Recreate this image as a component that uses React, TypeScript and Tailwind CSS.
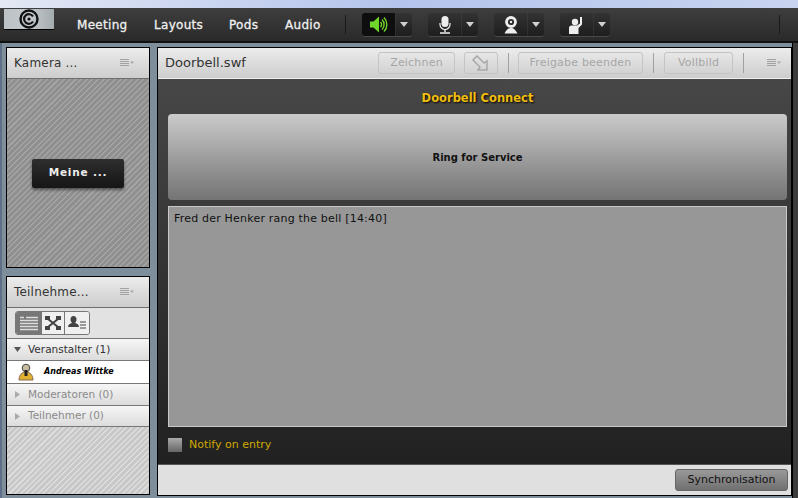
import type { ReactNode } from "react";

const MENU = [
  { label: "Meeting", width: "w-[77px]" },
  { label: "Layouts", width: "w-[75px]" },
  { label: "Pods", width: "w-[56px]" },
  { label: "Audio", width: "w-[48px]" },
];

const HATCH =
  "bg-[repeating-linear-gradient(135deg,#a3a3a3_0px,#a3a3a3_1.5px,#8f8f8f_1.5px,#8f8f8f_4px)]";
const HATCH_LIGHT =
  "bg-[repeating-linear-gradient(135deg,#dcdcdc_0px,#dcdcdc_1.5px,#c8c8c8_1.5px,#c8c8c8_4px)]";

function MenuIcon() {
  return (
    <svg width="14" height="8" viewBox="0 0 14 8" className="shrink-0">
      <path d="M0 .5h9M0 2.5h9M0 4.5h9M0 6.5h9" stroke="#a2a2a2" strokeWidth="1" />
      <path d="M10 2.5h4l-2 2.500z" fill="#a8a8a8" />
    </svg>
  );
}

function Caret() {
  return (
    <svg width="8" height="5" viewBox="0 0 8 5">
      <path d="M0 0h8L4 5z" fill="#d0d0d0" />
    </svg>
  );
}

function ToolGroup({ children, active }: { children: ReactNode; active?: boolean }) {
  return (
    <div className="flex h-[23px] rounded-[3px] shadow-[0_1px_0_#4a4a4a]">
      <div
        className={`flex w-[33px] items-center justify-center rounded-l-[3px] ${
          active ? "bg-[#0e0e0e]" : "bg-gradient-to-b from-[#333] to-[#1e1e1e]"
        }`}
      >
        {children}
      </div>
      <div className="ml-px flex w-[16px] items-center justify-center rounded-r-[3px] bg-gradient-to-b from-[#333] to-[#1e1e1e]">
        <Caret />
      </div>
    </div>
  );
}

function DisabledButton({ children, width }: { children: ReactNode; width: string }) {
  return (
    <div
      className={`flex h-[22px] items-center justify-center rounded-[3px] border border-[#c4c4c4] text-[11px] tracking-[0.2px] text-[#a6a6a6] ${width}`}
    >
      {children}
    </div>
  );
}

function Separator() {
  return <div className="h-[20px] w-px bg-[#a0a0a0]" />;
}

function PanelHeader({ title }: { title: string }) {
  return (
    <div className="flex h-[31px] shrink-0 items-center justify-between border-b border-[#6e6e6e] bg-gradient-to-b from-[#ececec] to-[#cdcdcd] pl-[7px] pr-[15px] text-[12px] tracking-[0.2px] text-[#333]">
      <span>{title}</span>
      <MenuIcon />
    </div>
  );
}

function TreeRow({ label, open, height }: { label: string; open?: boolean; height: string }) {
  return (
    <div
      className={`flex shrink-0 items-center border-b border-[#777] bg-gradient-to-b from-[#f6f6f6] to-[#dcdcdc] pl-[7px] text-[10.5px] ${height} ${
        open ? "text-[#333]" : "text-[#8a8a8a]"
      }`}
    >
      <svg width="7" height="7" viewBox="0 0 7 7" className="mr-[7px]">
        {open ? <path d="M0 1h7L3.500 6z" fill="#555" /> : <path d="M1 0l5 3.500L1 7z" fill="#aaa" />}
      </svg>
      {label}
    </div>
  );
}

export default function App() {
  return (
    <div className="flex h-[498px] w-[798px] flex-col overflow-hidden bg-[#7e8f9b] font-['DejaVu_Sans',sans-serif]">
      {/* window title strip */}
      <div className="h-[8px] shrink-0 bg-gradient-to-r from-[#e4e8f4] via-[#b4c4ec] to-[#c8d4f0]" />

      {/* menu bar */}
      <div className="flex h-[35px] shrink-0 items-center border-b-2 border-[#111] bg-gradient-to-b from-[#3e3e3e] to-[#2a2a2a] pl-[4px]">
        <div className="mb-[11px] flex h-[21px] w-[50px] items-center justify-center border-b border-black bg-gradient-to-r from-[#bcc2c6] via-[#c4c8cc] to-[#a4acb0]">
          <svg width="20" height="20" viewBox="0 0 20 20">
            <circle cx="10" cy="10" r="8.500" fill="none" stroke="#111" strokeWidth="2.400" />
            <path d="M14 7.500a4.800 4.800 0 1 0 0 5" fill="none" stroke="#111" strokeWidth="2.200" />
            <circle cx="10" cy="10" r="1.600" fill="#111" />
          </svg>
        </div>
        <div className="ml-[23px] flex text-[12px] tracking-[0.3px] text-[#f0f0f0] [-webkit-text-stroke:0.3px_#f0f0f0]">
          {MENU.map((item) => (
            <span key={item.label} className={item.width}>
              {item.label}
            </span>
          ))}
        </div>
        <div className="ml-[12px] h-[19px] w-px bg-[#1a1a1a]" />
        <div className="ml-[16px] flex gap-[16px]">
          <ToolGroup active>
            <svg width="18" height="17" viewBox="0 0 18 17">
              <path d="M0 5.500h3.500L9 .5v16l-5.500-5H0z" fill="#6fd62a" />
              <path d="M10.500 6a3.500 3.500 0 0 1 0 5M12 3.500a7 7 0 0 1 0 10M14 1.500a10 10 0 0 1 0 14" fill="none" stroke="#6fd62a" strokeWidth="1.400" />
            </svg>
          </ToolGroup>
          <ToolGroup>
            <svg width="16" height="18" viewBox="0 0 16 18">
              <rect x="4.500" y="0" width="7" height="11" rx="3.500" fill="#eee" />
              <path d="M3 7v1.500a5 5 0 0 0 10 0V7" fill="none" stroke="#eee" strokeWidth="1.200" />
              <path d="M8 13v3M3 17h10" stroke="#eee" strokeWidth="1.400" />
            </svg>
          </ToolGroup>
          <ToolGroup>
            <svg width="18" height="18" viewBox="0 0 18 18">
              <circle cx="9" cy="6" r="4.500" fill="none" stroke="#eee" strokeWidth="2.800" />
              <circle cx="9" cy="6" r="1.200" fill="#eee" />
              <path d="M9 12c-3 0-4.500 2-6.500 5.500h13C13.500 14 12 12 9 12z" fill="#eee" />
            </svg>
          </ToolGroup>
          <ToolGroup>
            <svg width="17" height="18" viewBox="0 0 17 18">
              <circle cx="7" cy="6" r="3.200" fill="#eee" />
              <path d="M1 18v-6c0-1.500 1-2.500 2.500-2.500H9l3-2V1h2v7.500L10.500 12v6z" fill="#eee" />
            </svg>
          </ToolGroup>
        </div>
        <div className="ml-auto mr-[18px] h-[19px] w-px bg-[#1a1a1a]" />
      </div>

      {/* workspace */}
      <div className="flex min-h-0 flex-1 border-l-2 border-[#5f6f88] pl-[4px] pt-[4px]">
        <div className="flex w-[144px] shrink-0 flex-col gap-[8px] pb-[3px]">
          {/* camera pod */}
          <div className="flex h-[221px] flex-col border border-black">
            <PanelHeader title="Kamera ..." />
            <div className={`flex flex-1 items-center justify-center ${HATCH}`}>
              <div className="flex h-[29px] w-[92px] items-center justify-center rounded-[2px] bg-gradient-to-b from-[#2e2e2e] to-[#161616] text-[10.5px] font-bold tracking-[0.8px] text-[#eee] shadow-[0_2px_3px_rgba(0,0,0,0.45)]">
                Meine ...
              </div>
            </div>
          </div>

          {/* attendees pod */}
          <div className="flex flex-1 flex-col border border-black">
            <PanelHeader title="Teilnehme..." />
            <div className="flex h-[31px] shrink-0 items-center border-b border-[#777] bg-[#e2e2e2] pl-[8px]">
              <div className="flex h-[24px] overflow-hidden rounded-[3px] border border-[#777]">
                <div className="flex w-[25px] items-center justify-center bg-[#777]">
                  <svg width="18" height="15" viewBox="0 0 18 15">
                    <path d="M0 1.500h4M6 1.500h12M0 4.500h18M0 7.500h18M0 10.500h18M0 13.500h18" stroke="#dcdcdc" strokeWidth="1.500" />
                  </svg>
                </div>
                <div className="flex w-[24px] items-center justify-center border-x border-[#777] bg-[#f0f0f0]">
                  <svg width="16" height="14" viewBox="0 0 16 14">
                    <path d="M0 0h5v4H0zM11 0h5v4h-5zM0 10h5v4H0zM11 10h5v4h-5z" fill="#444" />
                    <path d="M3 3l10 8M13 3L3 11" stroke="#444" strokeWidth="2" />
                  </svg>
                </div>
                <div className="flex w-[24px] items-center justify-center bg-[#f0f0f0]">
                  <svg width="18" height="14" viewBox="0 0 18 14">
                    <path d="M5.500 0c2 0 3 1.500 3 3.500S7 7 7 7c2 .5 4 1.500 4 4H0c0-2.500 2-3.500 4-4 0 0-1.500-1.500-1.500-3.500S3.500 0 5.500 0z" fill="#444" />
                    <path d="M12 6h6M12 9h6M12 12h6" stroke="#444" strokeWidth="1.200" />
                  </svg>
                </div>
              </div>
            </div>
            <TreeRow label="Veranstalter (1)" open height="h-[22px]" />
            <div className="flex h-[23px] shrink-0 items-center border-b border-[#777] bg-white pl-[10px]">
              <svg width="18" height="18" viewBox="0 0 18 18">
                <circle cx="9" cy="5" r="3.800" fill="#c8bca0" stroke="#444" strokeWidth="1" />
                <path d="M2 17c0-5 3-8 7-8s7 3 7 8z" fill="#e0b030" stroke="#865" strokeWidth="1" />
                <rect x="7.500" y="7" width="3" height="6" fill="#222" />
              </svg>
              <span className="ml-[9px] text-[8px] font-bold italic text-black">Andreas Wittke</span>
            </div>
            <TreeRow label="Moderatoren (0)" height="h-[22px]" />
            <TreeRow label="Teilnehmer (0)" height="h-[21px]" />
            <div className={`flex-1 ${HATCH_LIGHT}`} />
          </div>
        </div>

        {/* main pod */}
        <div className="mb-[2px] ml-[7px] flex flex-1 flex-col border border-black">
          <div className="flex h-[31px] shrink-0 items-center border-b border-[#eee] bg-gradient-to-b from-[#ececec] to-[#cdcdcd] pl-[7px] text-[13px] text-[#333]">
            <span className="w-[213px]">Doorbell.swf</span>
            <DisabledButton width="w-[77px]">Zeichnen</DisabledButton>
            <div className="ml-[9px]">
              <DisabledButton width="w-[34px]">
                <svg width="18" height="16" viewBox="0 0 18 16">
                  <path d="M1 5l4-4 7 7 3-2v9H6l2-3z" fill="none" stroke="#a8a8a8" strokeWidth="1.500" />
                </svg>
              </DisabledButton>
            </div>
            <div className="ml-[10px]">
              <Separator />
            </div>
            <div className="ml-[9px]">
              <DisabledButton width="w-[125px]">Freigabe beenden</DisabledButton>
            </div>
            <div className="ml-[10px]">
              <Separator />
            </div>
            <div className="ml-[10px]">
              <DisabledButton width="w-[69px]">Vollbild</DisabledButton>
            </div>
            <div className="ml-[10px]">
              <Separator />
            </div>
            <div className="ml-[23px]">
              <MenuIcon />
            </div>
          </div>

          <div className="flex min-h-0 flex-1 flex-col bg-gradient-to-b from-[#474747] to-[#212121] pl-[10px] pr-[4px]">
            <div className="flex h-[35px] shrink-0 items-center justify-center pt-[5px] text-[11.5px] font-bold text-[#f0bd10] [text-shadow:1px_1px_2px_#000]">
              Doorbell Connect
            </div>
            <div className="flex h-[86px] shrink-0 items-center justify-center rounded-[4px] bg-gradient-to-b from-[#cbcbcb] to-[#747474] text-[10px] font-bold text-[#111]">
              Ring for Service
            </div>
            <div className="mt-[6px] h-[221px] shrink-0 border border-[#c8c8c8] bg-[#979797] px-[5px] pt-[4px] text-[11px] tracking-[0.2px] text-[#111]">
              Fred der Henker rang the bell [14:40]
            </div>
            <div className="mt-[10px] flex items-center">
              <div className="h-[14px] w-[14px] bg-gradient-to-b from-[#aaa] to-[#666]" />
              <span className="ml-[7px] text-[11px] text-[#d0a800]">Notify on entry</span>
            </div>
          </div>

          <div className="flex h-[31px] shrink-0 items-center justify-end border-t border-[#555] bg-[#e0e0e0] pr-[3px]">
            <div className="flex h-[22px] w-[113px] items-center justify-center rounded-[3px] border border-[#666] bg-gradient-to-b from-[#9a9a9a] to-[#707070] text-[11px] text-[#111]">
              Synchronisation
            </div>
          </div>
        </div>

        {/* right edge rail */}
        <div className="-mt-[4px] w-[6px] shrink-0 border-l border-black bg-[#3c3c3c]" />
      </div>
    </div>
  );
}
